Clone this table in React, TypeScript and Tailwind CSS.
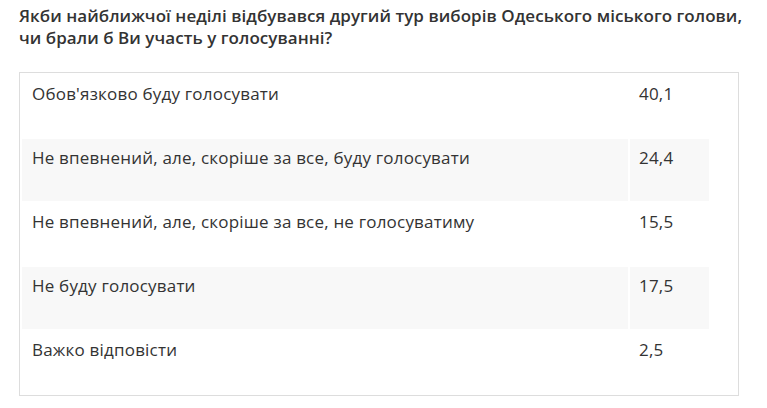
const rows = [
  { label: "Обов'язково буду голосувати", value: "40,1" },
  { label: "Не впевнений, але, скоріше за все, буду голосувати", value: "24,4" },
  { label: "Не впевнений, але, скоріше за все, не голосуватиму", value: "15,5" },
  { label: "Не буду голосувати", value: "17,5" },
  { label: "Важко відповісти", value: "2,5" },
];

export default function App() {
  return (
    <div className="min-h-screen bg-white px-[19px] pt-[5px] text-[#333] font-['Open_Sans',sans-serif]">
      <h2 className="text-[17px] leading-[22px] font-semibold tracking-[0.05px]">
        Якби найближчої неділі відбувався другий тур виборів Одеського міського голови,
        <br />
        чи брали б Ви участь у голосуванні?
      </h2>

      <div className="mt-[23px] w-[720px] border border-[#ddd]">
        <table className="border-separate border-spacing-[2px]">
          <tbody>
            {rows.map((r, i) => (
              <tr key={r.label} className={i % 2 === 1 ? "bg-[#f8f8f8]" : ""}>
                <td className="h-[62px] w-[606px] px-[10px] pt-[8px] align-top text-[17px] leading-[22px] tracking-[0.2px]">
                  {r.label}
                </td>
                <td className="h-[62px] w-[79px] px-[9px] pt-[8px] align-top text-[17px] leading-[22px] tracking-[0.2px]">
                  {r.value}
                </td>
              </tr>
            ))}
          </tbody>
        </table>
      </div>
    </div>
  );
}
